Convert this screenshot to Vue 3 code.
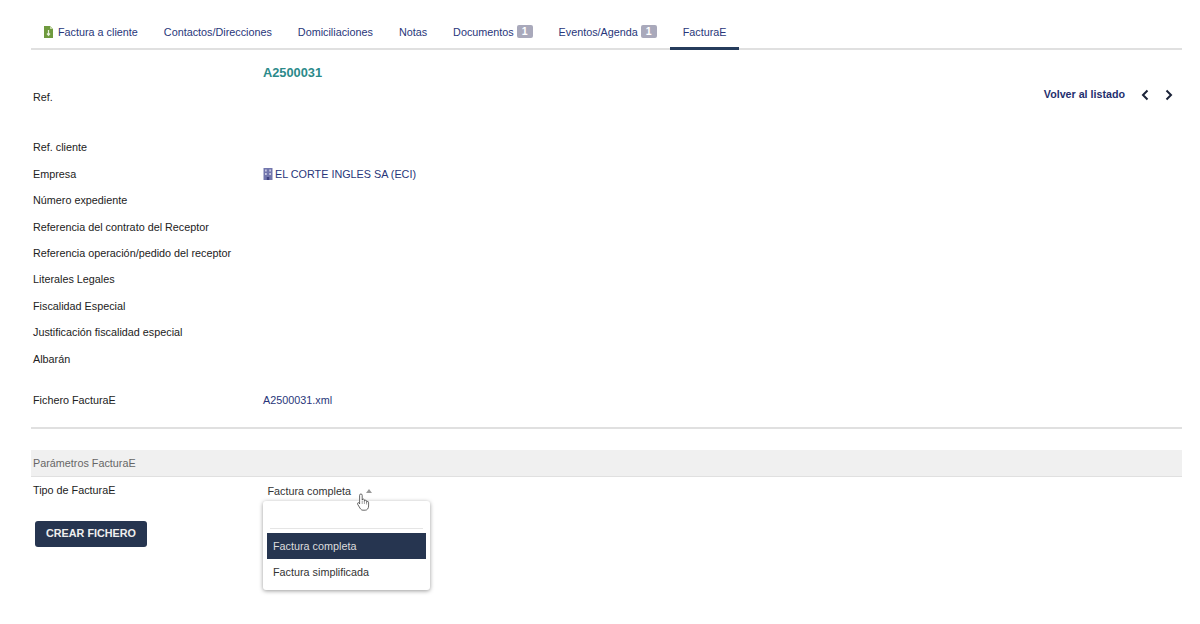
<template>
  <div class="page">
    <nav class="tabs">
      <a v-for="tab in tabs" :key="tab.label" class="tab" :class="{ active: tab.active }">
        <svg v-if="tab.icon" class="file-icon" viewBox="0 0 9 12" width="9" height="12">
          <path d="M0 0h6l3 3v9H0z" fill="#6f9a3f" />
          <path d="M6 0l3 3H6z" fill="#c5d8a8" />
          <path d="M4.500 4v5M3 7.500l1.500 1.800L6 7.500" stroke="#e8f0dc" stroke-width="1.200" fill="none" />
        </svg>
        {{ tab.label }}
        <span v-if="tab.badge" class="badge">{{ tab.badge }}</span>
      </a>
    </nav>

    <div class="banner">
      <span class="label ref-label">Ref.</span>
      <strong class="ref">A2500031</strong>
      <div class="pager">
        <a class="back">Volver al listado</a>
        <svg viewBox="0 0 10 12" width="10" height="12"><path d="M7.500 1.500L3 6l4.500 4.500" /></svg>
        <svg viewBox="0 0 10 12" width="10" height="12"><path d="M2.500 1.500L7 6l-4.500 4.500" /></svg>
      </div>
    </div>

    <div class="fields">
      <div v-for="field in fields" :key="field.label" class="field">
        <span class="label">{{ field.label }}</span>
        <a v-if="field.company" class="value">
          <svg class="building" viewBox="0 0 10 12" width="10" height="12">
            <path d="M0.500 0h9v12h-9z" fill="#7276ad" />
            <path d="M2.200 1.500h1.400v2H2.200zM6.400 1.500h1.400v2H6.400zM2.200 5h1.400v2H2.200zM6.400 5h1.400v2H6.400z" fill="#dcdcee" />
            <path d="M3.800 9h2.400v3H3.800z" fill="#3d4180" />
          </svg>
          {{ field.company }}
        </a>
      </div>
    </div>

    <div class="field file-row">
      <span class="label">Fichero FacturaE</span>
      <a class="value">A2500031.xml</a>
    </div>

    <hr class="divider" />

    <div class="section-title">Parámetros FacturaE</div>

    <div class="type-row">
      <span class="label">Tipo de FacturaE</span>
      <div class="select">
        <span class="selected">Factura completa</span>
        <span class="arrow"></span>
        <ul class="menu">
          <li class="blank"></li>
          <li class="option current">Factura completa</li>
          <li class="option">Factura simplificada</li>
        </ul>
        <svg class="cursor" viewBox="0 0 13 18" width="13" height="18">
          <path d="M2.600 2.300a1.300 1.300 0 0 1 2.600 0V7a1.100 1.100 0 0 1 2.200.4v.8a1.100 1.100 0 0 1 2.200.3v.8a1 1 0 0 1 2 .3v3.400c0 2.400-1.400 4.200-3.400 4.200H6c-1.500 0-2.200-.8-3-2L.6 11.200c-.6-1 .7-2.100 1.500-1.200l.5.9z" fill="#fff" stroke="#444" stroke-width=".8" stroke-linejoin="round" />
          <path d="M5.200 7.500v3.500M7.400 8v3M9.600 9v2.500" stroke="#666" stroke-width=".6" fill="none" />
        </svg>
      </div>
    </div>

    <button class="create" type="button">CREAR FICHERO</button>
  </div>
</template>

<script setup>
const tabs = [
  { label: 'Factura a cliente', icon: true },
  { label: 'Contactos/Direcciones' },
  { label: 'Domiciliaciones' },
  { label: 'Notas' },
  { label: 'Documentos', badge: 1 },
  { label: 'Eventos/Agenda', badge: 1 },
  { label: 'FacturaE', active: true }
]

const fields = [
  { label: 'Ref. cliente' },
  { label: 'Empresa', company: 'EL CORTE INGLES SA (ECI)' },
  { label: 'Número expediente' },
  { label: 'Referencia del contrato del Receptor' },
  { label: 'Referencia operación/pedido del receptor' },
  { label: 'Literales Legales' },
  { label: 'Fiscalidad Especial' },
  { label: 'Justificación fiscalidad especial' },
  { label: 'Albarán' }
]
</script>

<style>
html, body {
  margin: 0;
  background: #fff;
}
</style>

<style scoped>
.page {
  height: 624px;
  box-sizing: border-box;
  padding: 14px 18px 0 31px;
  font-family: "Liberation Sans", Arial, sans-serif;
  font-size: 10.800px;
  color: #222;
  overflow: hidden;
}

.tabs {
  display: flex;
  align-items: flex-start;
  height: 34px;
  border-bottom: 2px solid #e0e0e0;
}

.tab {
  display: flex;
  align-items: center;
  gap: 3px;
  box-sizing: border-box;
  height: 35px;
  padding: 0 13px;
  color: #28367a;
  white-space: nowrap;
}

.tab.active {
  height: 36px;
  padding-top: 2px;
  border-bottom: 3px solid #263c5c;
}

.file-icon {
  margin-right: 2px;
}

.badge {
  padding: 1px 5px;
  border-radius: 2px;
  background: #a9a9bb;
  color: #fff;
  font-size: 10.500px;
  font-weight: bold;
  line-height: 11px;
}

.banner {
  display: grid;
  grid-template-columns: 232px 1fr auto;
  height: 84px;
}

.label {
  padding-left: 2px;
}

.ref-label {
  padding-top: 41px;
}

.ref {
  padding-top: 15px;
  font-size: 12.800px;
  color: #2c8a8a;
}

.pager {
  display: flex;
  align-items: flex-start;
  gap: 14px;
  padding: 38px 8px 0 0;
}

.back {
  margin-right: 1px;
  font-size: 10.700px;
  font-weight: bold;
  color: #1f2f6e;
}

.pager svg {
  margin-top: 1px;
}

.pager path {
  fill: none;
  stroke: #1a2238;
  stroke-width: 2;
}

.fields {
  display: flex;
  flex-direction: column;
}

.field {
  display: grid;
  grid-template-columns: 232px 1fr;
  align-items: center;
  height: 26.440px;
}

.value {
  display: flex;
  align-items: center;
  gap: 2px;
  color: #28367a;
}

.file-row {
  margin-top: 15px;
}

.divider {
  margin: 14px 0 0;
  border: 0;
  border-top: 2px solid #e0e0e0;
}

.section-title {
  margin-top: 21px;
  height: 26px;
  line-height: 26px;
  padding-left: 2px;
  background: #f0f0f0;
  border-bottom: 1px solid #e0e0e0;
  color: #666;
}

.type-row {
  display: grid;
  grid-template-columns: 232px 1fr;
  padding-top: 7px;
}

.select {
  position: relative;
  display: flex;
  align-items: center;
  padding-left: 4.500px;
  height: 14px;
}

.selected {
  color: #333;
}

.arrow {
  margin-left: 15px;
  border: 3px solid transparent;
  border-top: 0;
  border-bottom: 4px solid #999;
}

.cursor {
  position: absolute;
  left: 94px;
  top: 9px;
}

.menu {
  position: absolute;
  top: 17px;
  left: 0;
  width: 167px;
  box-sizing: border-box;
  margin: 0;
  padding: 0 4px 5px;
  list-style: none;
  background: #fff;
  border-radius: 3px;
  box-shadow: 0 1px 4px rgba(0, 0, 0, .4);
}

.blank {
  height: 27px;
  margin: 0 3px 4px;
  border-bottom: 1px solid #e5e5e5;
}

.option {
  height: 26px;
  line-height: 26px;
  padding-left: 6px;
  color: #333;
}

.option.current {
  background: #263550;
  color: #ddd;
}

.create {
  display: block;
  margin: 23px 0 0 4px;
  width: 112px;
  height: 26px;
  padding: 0 0 2px;
  border: 0;
  border-radius: 3px;
  background: #263550;
  color: #eee;
  font: bold 10.800px "Liberation Sans", Arial, sans-serif;
}
</style>
